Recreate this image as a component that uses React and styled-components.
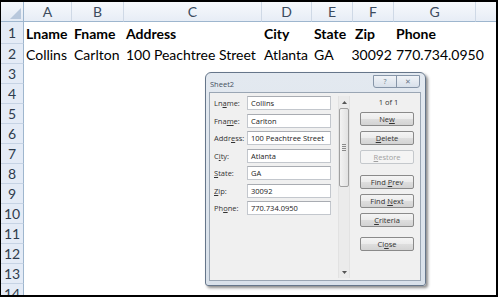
import React from "react";
import styled, { createGlobalStyle } from "styled-components";

const GlobalStyle = createGlobalStyle`
  html, body {
    margin: 0;
    padding: 0;
    background: #fff;
  }
  body {
    width: 498px;
    height: 298px;
    overflow: hidden;
  }
`;

const columns = [
  { id: "A", width: 48 },
  { id: "B", width: 52 },
  { id: "C", width: 138 },
  { id: "D", width: 50 },
  { id: "E", width: 41 },
  { id: "F", width: 41 },
  { id: "G", width: 82 },
  { id: "H", width: 40 },
];

const rows = [
  { n: 1, h: 22, bold: true, cells: ["Lname", "Fname", "Address", "City", "State", "Zip", "Phone"] },
  { n: 2, h: 20, cells: ["Collins", "Carlton", "100 Peachtree Street", "Atlanta", "GA", "30092", "770.734.0950"], right: [5] },
  ...Array.from({ length: 12 }, (_, i) => ({ n: i + 3, h: 20, cells: [] })),
];

const formFields = [
  { pre: "Ln", u: "a", post: "me:", value: "Collins" },
  { pre: "Fna", u: "m", post: "e:", value: "Carlton" },
  { pre: "Addr", u: "e", post: "ss:", value: "100 Peachtree Street" },
  { pre: "C", u: "i", post: "ty:", value: "Atlanta" },
  { pre: "", u: "S", post: "tate:", value: "GA" },
  { pre: "", u: "Z", post: "ip:", value: "30092" },
  { pre: "Ph", u: "o", post: "ne:", value: "770.734.0950" },
];

const commands = [
  { pre: "Ne", u: "w", post: "" },
  { pre: "", u: "D", post: "elete" },
  { pre: "", u: "R", post: "estore", disabled: true },
  { pre: "Find ", u: "P", post: "rev", space: 6 },
  { pre: "Find ", u: "N", post: "ext" },
  { pre: "", u: "C", post: "riteria" },
  { pre: "Cl", u: "o", post: "se", space: 5 },
];

const Page = styled.div`
  position: relative;
  width: 498px;
  height: 298px;
`;

const Sheet = styled.div`
  box-sizing: border-box;
  width: 498px;
  height: 297px;
  border-top: 2px solid #000;
  border-left: 1px solid #000;
  border-right: 2px solid #000;
  border-bottom: 2px solid #000;
  overflow: hidden;
  font-family: Lato, "Liberation Sans", sans-serif;
  font-size: 14px;
  color: #000;
`;

const Row = styled.div`
  display: flex;
  height: ${({ $h }) => $h}px;
`;

const Corner = styled.div`
  box-sizing: border-box;
  width: 23px;
  flex: none;
  position: relative;
  background: linear-gradient(#f4f7fb, #e3eaf4);
  border-right: 1px solid #9eb6ce;
  border-bottom: 1px solid #9eb6ce;

  svg {
    position: absolute;
    right: 2px;
    bottom: 2px;
  }
`;

const ColHead = styled.div`
  box-sizing: border-box;
  width: ${({ $w }) => $w}px;
  flex: none;
  display: flex;
  align-items: center;
  justify-content: center;
  background: linear-gradient(#f7f9fc, #e7edf6);
  border-right: 1px solid #cfd9e6;
  border-bottom: 1px solid #9eb6ce;
  color: #3c4b5e;
  font-size: 14px;
`;

const RowHead = styled.div`
  box-sizing: border-box;
  width: 23px;
  flex: none;
  display: flex;
  align-items: center;
  justify-content: center;
  background: #e4ebf6;
  border-right: 1px solid #9eb6ce;
  border-bottom: 1px solid #c6d3e4;
  color: #2f3c4c;
  font-size: 14px;
`;

const Cell = styled.div`
  box-sizing: border-box;
  width: ${({ $w }) => $w}px;
  flex: none;
  display: flex;
  align-items: center;
  justify-content: ${({ $right }) => ($right ? "flex-end" : "flex-start")};
  padding: 1px 2px 0;
  white-space: nowrap;
  font-weight: ${({ $bold }) => ($bold ? 700 : 400)};
`;

const Dialog = styled.div`
  position: absolute;
  left: 205px;
  top: 72px;
  box-sizing: border-box;
  width: 221px;
  height: 214px;
  display: flex;
  flex-direction: column;
  background: linear-gradient(#e3e9f0, #d9e1ea);
  border: 1px solid #66768a;
  border-radius: 6px 6px 3px 3px;
  box-shadow: 2px 2px 3px rgba(0, 0, 0, 0.45);
  font-family: "Open Sans", "Noto Sans", sans-serif;
  font-size: 7.5px;
  color: #333;
`;

const TitleBar = styled.div`
  height: 19px;
  display: flex;
  align-items: flex-start;
  justify-content: space-between;
  padding: 0 5px 0 4px;
`;

const Title = styled.div`
  padding-top: 6px;
  color: #44505e;
`;

const CaptionGroup = styled.div`
  display: flex;
  margin-top: 2px;
  height: 11px;
  border: 1px solid #8695a8;
  border-radius: 0 0 3px 3px;
  background: linear-gradient(#f0f3f7, #d8e0ea);
  overflow: hidden;
`;

const CaptionButton = styled.div`
  width: 22px;
  display: flex;
  align-items: center;
  justify-content: center;
  color: #6b7889;
  font-size: 7px;
  & + & {
    border-left: 1px solid #8695a8;
  }
`;

const Client = styled.div`
  flex: 1;
  margin: 0 4px 4px 3px;
  display: flex;
  align-items: flex-start;
  padding: 3px 6px 0 4px;
  background: #f0f0f0;
  border: 1px solid #9aa6b4;
`;

const FieldList = styled.div`
  display: flex;
  flex-direction: column;
  gap: 3.5px;
`;

const FieldRow = styled.div`
  display: flex;
  align-items: center;
  height: 14px;
`;

const Label = styled.div`
  width: 33px;
  color: #333;
  white-space: nowrap;
`;

const Input = styled.div`
  box-sizing: border-box;
  width: 84px;
  height: 14px;
  display: flex;
  align-items: center;
  padding-left: 3px;
  background: #fff;
  border: 1px solid #c3c7cd;
  border-top-color: #a9acb2;
  color: #222;
`;

const ScrollBar = styled.div`
  box-sizing: border-box;
  margin-left: 7px;
  width: 12px;
  height: 182px;
  display: flex;
  flex-direction: column;
  align-items: center;
  background: #ebebeb;
  border-left: 1px solid #e2e2e2;
  border-right: 1px solid #e2e2e2;
`;

const Arrow = styled.div`
  height: 12px;
  display: flex;
  align-items: center;
  justify-content: center;
`;

const Thumb = styled.div`
  box-sizing: border-box;
  width: 10px;
  height: 79px;
  display: flex;
  flex-direction: column;
  align-items: center;
  justify-content: center;
  gap: 1px;
  background: linear-gradient(90deg, #f3f3f3, #e2e2e2);
  border: 1px solid #a0a0a0;
  border-radius: 2px;
`;

const Grip = styled.div`
  width: 4px;
  height: 1px;
  background: #8a8a8a;
`;

const Spacer = styled.div`
  flex: 1;
`;

const Commands = styled.div`
  margin-left: 10px;
  width: 54px;
  display: flex;
  flex-direction: column;
  gap: 5px;
`;

const Counter = styled.div`
  height: 11px;
  display: flex;
  align-items: center;
  justify-content: center;
  padding-left: 3px;
  color: #333;
`;

const Button = styled.div`
  box-sizing: border-box;
  height: 14px;
  margin-top: ${({ $space }) => $space || 0}px;
  display: flex;
  align-items: center;
  justify-content: center;
  white-space: pre;
  border: 1px solid ${({ $disabled }) => ($disabled ? "#c4c8cc" : "#8a8a8a")};
  border-radius: 2px;
  background: ${({ $disabled }) =>
    $disabled
      ? "#f4f4f4"
      : "linear-gradient(#f4f4f4 0%, #ececec 48%, #dedede 52%, #d3d3d3 100%)"};
  color: ${({ $disabled }) => ($disabled ? "#a0a0a0" : "#333")};
`;

const Mnemonic = ({ pre, u, post }) => (
  <span>
    {pre}
    <u>{u}</u>
    {post}
  </span>
);

export default function App() {
  return (
    <Page>
      <GlobalStyle />
      <Sheet>
        <Row $h={20}>
          <Corner>
            <svg width="11" height="11" viewBox="0 0 11 11">
              <polygon points="11,0 11,11 0,11" fill="#b8c8dc" />
            </svg>
          </Corner>
          {columns.map((c) => (
            <ColHead key={c.id} $w={c.width}>
              {c.id === "H" ? "" : c.id}
            </ColHead>
          ))}
        </Row>
        {rows.map((r) => (
          <Row key={r.n} $h={r.h}>
            <RowHead>{r.n}</RowHead>
            {columns.map((c, i) => (
              <Cell
                key={c.id}
                $w={c.width}
                $bold={r.bold}
                $right={r.right && r.right.includes(i)}
              >
                {r.cells[i] || ""}
              </Cell>
            ))}
          </Row>
        ))}
      </Sheet>

      <Dialog>
        <TitleBar>
          <Title>Sheet2</Title>
          <CaptionGroup>
            <CaptionButton>?</CaptionButton>
            <CaptionButton>✕</CaptionButton>
          </CaptionGroup>
        </TitleBar>
        <Client>
          <FieldList>
            {formFields.map((f) => (
              <FieldRow key={f.value}>
                <Label>
                  <Mnemonic pre={f.pre} u={f.u} post={f.post} />
                </Label>
                <Input>{f.value}</Input>
              </FieldRow>
            ))}
          </FieldList>
          <ScrollBar>
            <Arrow>
              <svg width="5" height="3" viewBox="0 0 5 3">
                <polygon points="2.5,0 5,3 0,3" fill="#555" />
              </svg>
            </Arrow>
            <Thumb>
              <Grip />
              <Grip />
              <Grip />
              <Grip />
            </Thumb>
            <Spacer />
            <Arrow>
              <svg width="5" height="3" viewBox="0 0 5 3">
                <polygon points="0,0 5,0 2.5,3" fill="#555" />
              </svg>
            </Arrow>
          </ScrollBar>
          <Commands>
            <Counter>1 of 1</Counter>
            {commands.map((b) => (
              <Button key={b.u + b.post} $disabled={b.disabled} $space={b.space}>
                <Mnemonic pre={b.pre} u={b.u} post={b.post} />
              </Button>
            ))}
          </Commands>
        </Client>
      </Dialog>
    </Page>
  );
}
